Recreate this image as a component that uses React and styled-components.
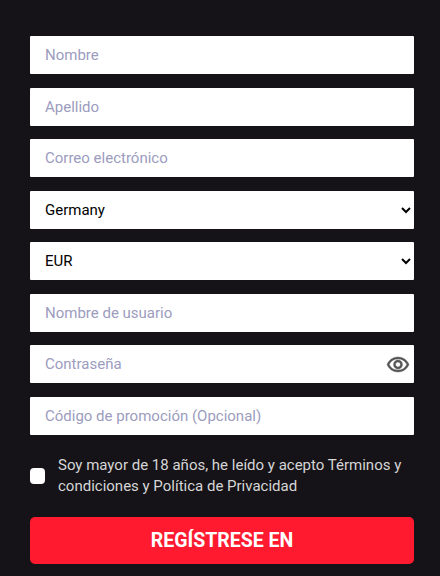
import React from 'react'
import styled, { createGlobalStyle, css } from 'styled-components'

const GlobalStyle = createGlobalStyle`
  html, body {
    margin: 0;
    padding: 0;
    background: #151317;
  }
  * {
    box-sizing: border-box;
  }
`

const Form = styled.form`
  display: flex;
  flex-direction: column;
  width: 440px;
  height: 576px;
  padding: 36px 26px 0 30px;
  font-family: Roboto, sans-serif;
  background: #151317;
  overflow: hidden;
`

const Fields = styled.div`
  display: flex;
  flex-direction: column;
  gap: 13.5px;
`

const fieldStyles = css`
  display: block;
  width: 384px;
  height: 38px;
  border: 0;
  border-radius: 1px;
  background-color: #fff;
  font-family: Roboto, sans-serif;
  font-size: 15px;
  outline: none;
`

const Input = styled.input`
  ${fieldStyles}
  padding: 0 15px;
  color: #000;

  &::placeholder {
    color: #9c9cbe;
    opacity: 1;
  }
`

const Select = styled.select`
  ${fieldStyles}
  padding: 0 11px;
  color: #000;
`

const PasswordWrap = styled.div`
  position: relative;
  width: 384px;
`

const EyeIcon = styled.svg`
  position: absolute;
  top: 7.5px;
  right: 4px;
  width: 24px;
  height: 24px;
  fill: #555;
  stroke: #555;
  stroke-width: 0.4;
`

const Terms = styled.label`
  display: flex;
  align-items: center;
  gap: 13px;
  margin-top: 20px;
  color: #d6d6d6;
  font-size: 15px;
  line-height: 21px;
`

const Check = styled.input`
  appearance: none;
  flex: none;
  width: 15px;
  height: 16px;
  margin: 0;
  border-radius: 4px;
  background: #fff;
`

const Submit = styled.button`
  width: 384px;
  height: 47px;
  margin-top: 20px;
  border: 0;
  border-radius: 5px;
  background: #ff1a2f;
  color: #fff;
  font-family: Roboto, sans-serif;
  font-size: 19.5px;
  font-weight: 700;
`

const Eye = () => (
  <EyeIcon viewBox="0 0 24 24" aria-hidden="true">
    <path d="M12 6a9.77 9.77 0 0 1 8.82 5.5A9.77 9.77 0 0 1 12 17a9.77 9.77 0 0 1-8.82-5.5A9.77 9.77 0 0 1 12 6m0-2C7 4 2.73 7.11 1 11.5 2.73 15.89 7 19 12 19s9.27-3.11 11-7.5C21.27 7.11 17 4 12 4zm0 5a2.5 2.5 0 0 1 0 5 2.5 2.5 0 0 1 0-5m0-2a4.5 4.5 0 1 0 0 9 4.5 4.5 0 0 0 0-9z" />
  </EyeIcon>
)

export default function App() {
  return (
    <>
      <GlobalStyle />
      <Form onSubmit={(e) => e.preventDefault()}>
        <Fields>
          <Input type="text" placeholder="Nombre" />
          <Input type="text" placeholder="Apellido" />
          <Input type="email" placeholder="Correo electrónico" />
          <Select defaultValue="Germany">
            <option>Germany</option>
            <option>Spain</option>
          </Select>
          <Select defaultValue="EUR">
            <option>EUR</option>
            <option>USD</option>
          </Select>
          <Input type="text" placeholder="Nombre de usuario" />
          <PasswordWrap>
            <Input type="password" placeholder="Contraseña" />
            <Eye />
          </PasswordWrap>
          <Input type="text" placeholder="Código de promoción (Opcional)" />
        </Fields>
        <Terms>
          <Check type="checkbox" />
          <span>Soy mayor de 18 años, he leído y acepto Términos y condiciones y Política de Privacidad</span>
        </Terms>
        <Submit type="submit">REGÍSTRESE EN</Submit>
      </Form>
    </>
  )
}
